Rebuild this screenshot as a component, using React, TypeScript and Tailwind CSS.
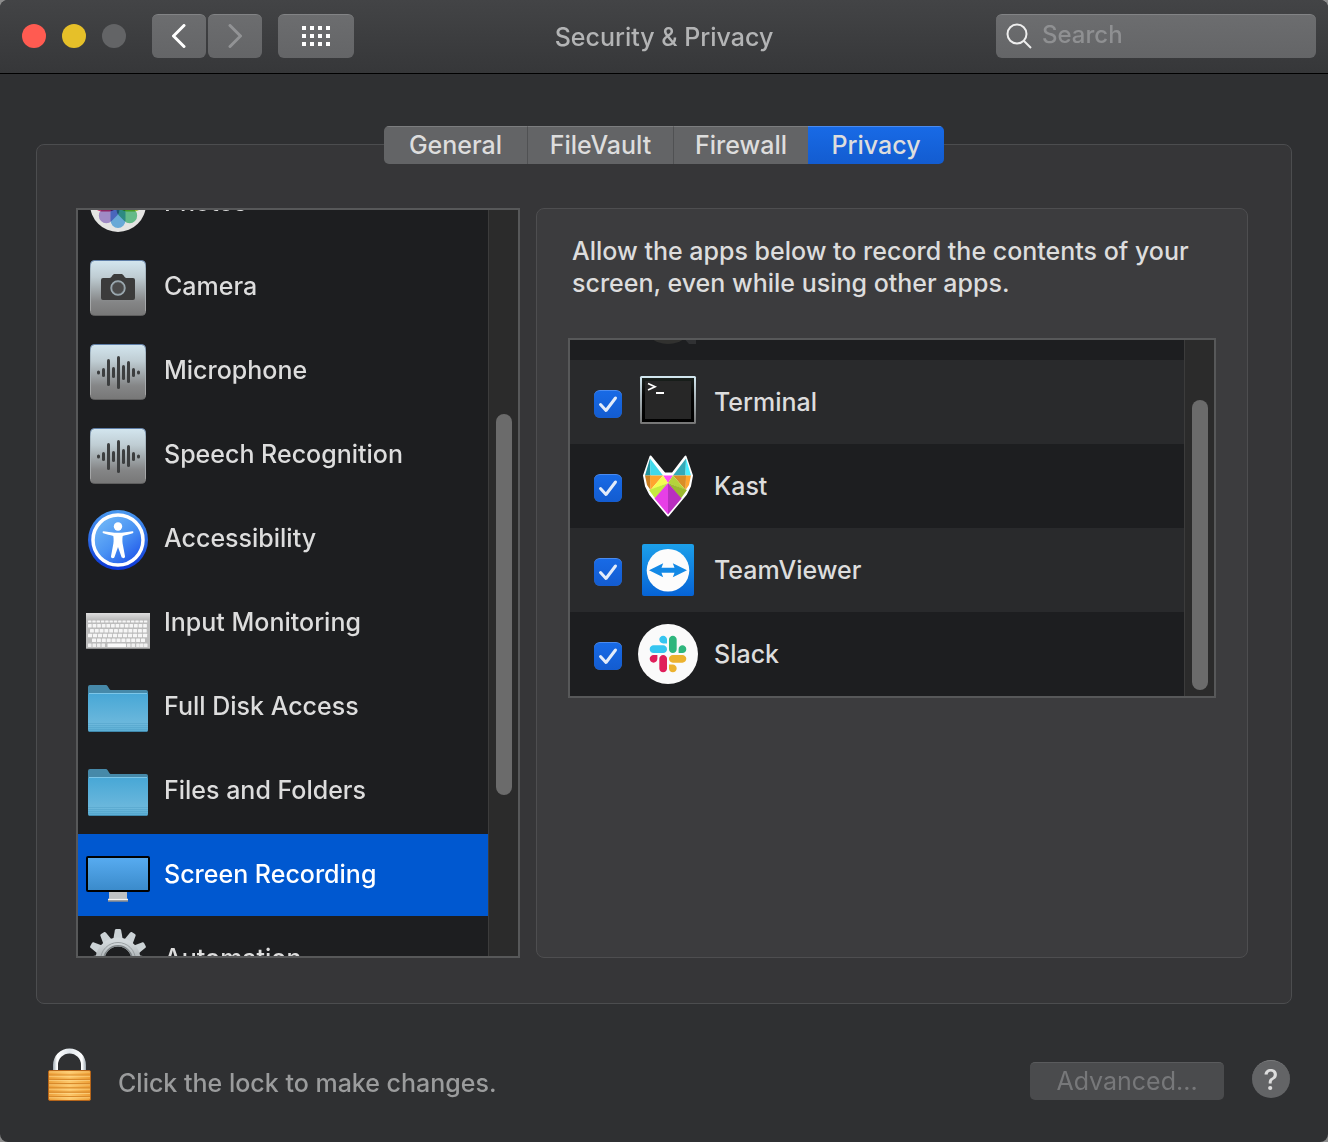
import { useLayoutEffect, useRef, useState } from "react";
import type { ReactNode } from "react";

const ANGLES_12 = [0, 30, 60, 90, 120, 150, 180, 210, 240, 270, 300, 330];

function Tile({ id, children }: { id: string; children: ReactNode }) {
  return (
    <svg viewBox="0 0 64 64" className="size-16" aria-hidden="true">
      <defs>
        <linearGradient id={`${id}-bg`} x1="0" y1="0" x2="0" y2="1">
          <stop offset="0" stopColor="#d3e6ef" />
          <stop offset="0.3" stopColor="#bfcdd3" />
          <stop offset="0.75" stopColor="#858687" />
          <stop offset="1" stopColor="#777777" />
        </linearGradient>
        <linearGradient id={`${id}-edge`} x1="0" y1="0" x2="0" y2="1">
          <stop offset="0" stopColor="#5f7fa8" />
          <stop offset="0.15" stopColor="#a9bac4" />
          <stop offset="0.9" stopColor="#a4a4a4" />
          <stop offset="1" stopColor="#5e5e5e" />
        </linearGradient>
      </defs>
      <rect x="4.5" y="4.5" width="55" height="55" rx="4" fill={`url(#${id}-bg)`} stroke={`url(#${id}-edge)`} />
      {children}
    </svg>
  );
}

function PhotosIcon() {
  const petals = [
    [0, "#f7a23b"],
    [45, "#f5d33c"],
    [90, "#b4d545"],
    [135, "#6fd09a"],
    [180, "#74bdf3"],
    [225, "#b39adf"],
    [270, "#e0457e"],
    [315, "#ef5a3f"],
  ] as const;
  return (
    <svg viewBox="0 0 64 64" className="size-16" aria-hidden="true">
      <circle cx="32" cy="32" r="28" fill="#e4e4e2" />
      {petals.map(([angle, color]) => (
        <rect
          key={angle}
          x="24.5"
          y="8"
          width="15"
          height="23"
          rx="7.5"
          fill={color}
          className="mix-blend-multiply"
          transform={`rotate(${angle} 32 32)`}
        />
      ))}
    </svg>
  );
}

function CameraIcon() {
  return (
    <Tile id="camera">
      <path
        d="M17 22h6.500c1.500 0 2-1 2.700-2.200.7-1.300 1.500-1.800 2.800-1.800h6c1.300 0 2.100.5 2.800 1.800.7 1.200 1.200 2.200 2.700 2.200H47a2 2 0 0 1 2 2v18a2 2 0 0 1-2 2H17a2 2 0 0 1-2-2V24a2 2 0 0 1 2-2z"
        fill="#3b3b3b"
      />
      <circle cx="32" cy="32" r="6.800" fill="#4a4a4a" stroke="#9fadb4" strokeWidth="1.800" />
      <circle cx="32" cy="32" r="6" fill="none" stroke="#6c7478" strokeWidth="0.600" />
    </Tile>
  );
}

function WaveIcon({ id }: { id: string }) {
  const bars = [
    [12.5, 30.5, 4],
    [17.5, 28, 9],
    [22.500, 19, 27],
    [27.5, 27, 11],
    [32.500, 16, 33],
    [37.5, 25, 15],
    [42.5, 21, 22],
    [47.5, 28, 9],
    [52.5, 30.5, 4],
  ];
  return (
    <Tile id={id}>
      {bars.map(([x, y, h]) => (
        <rect key={x} x={x - 1.5} y={y} width="3" height={h} rx="1.500" fill="#3c3e3f" />
      ))}
    </Tile>
  );
}

function AccessibilityIcon() {
  return (
    <svg viewBox="0 0 64 64" className="size-16" aria-hidden="true">
      <defs>
        <linearGradient id="acc-bg" x1="0.15" y1="0.1" x2="0.85" y2="0.95">
          <stop offset="0" stopColor="#6fb6f7" />
          <stop offset="0.5" stopColor="#4a93f3" />
          <stop offset="1" stopColor="#1f55ea" />
        </linearGradient>
        <linearGradient id="acc-rim" x1="0" y1="0" x2="0" y2="1">
          <stop offset="0" stopColor="#4a9af0" />
          <stop offset="1" stopColor="#0b36d8" />
        </linearGradient>
      </defs>
      <circle cx="32" cy="32" r="30" fill="url(#acc-rim)" />
      <circle cx="32" cy="32" r="25" fill="url(#acc-bg)" stroke="#fff" strokeWidth="3.500" />
      <circle cx="32" cy="18.500" r="4.200" fill="#fff" />
      <path
        d="M17.500 23.300c-1-.2-1.300 1.600-.2 2 3.200 1.100 6.900 1.900 10 2.600.6 3.500.3 7-.3 9.500L25 48.300c-.4 2 2.800 2.800 3.500.8L32 39l3.500 10.100c.7 2 3.900 1.200 3.500-.8l-2-10.900c-.6-2.500-.9-6-.3-9.500 3.100-.7 6.800-1.500 10-2.600 1.100-.4.800-2.200-.2-2-4.800.9-9.700 1.500-14.500 1.500s-9.700-.6-14.500-1.500z"
        fill="#fff"
      />
    </svg>
  );
}

function KeyboardIcon() {
  const rows = [
    { y: 28.5, h: 2, offset: 2, count: 14, w: 4.3 },
    { y: 32, h: 3.500, offset: 2, count: 13, w: 4.6 },
    { y: 37, h: 3.500, offset: 4, count: 12, w: 4.8 },
    { y: 41.800, h: 3.500, offset: 2, count: 12, w: 5 },
    { y: 46.600, h: 3.500, offset: 6, count: 11, w: 4.9 },
  ];
  return (
    <svg viewBox="0 0 64 64" className="size-16" aria-hidden="true">
      <defs>
        <linearGradient id="kbd-top" x1="0" y1="0" x2="0" y2="1">
          <stop offset="0" stopColor="#dedede" />
          <stop offset="1" stopColor="#b9b9b9" />
        </linearGradient>
      </defs>
      <rect x="0" y="21" width="64" height="36" rx="0.800" fill="#bcbcbc" />
      <rect x="0" y="21" width="64" height="7" fill="url(#kbd-top)" />
      <rect x="0" y="56" width="64" height="1" fill="#8f8f8f" />
      {rows.map((r) =>
        Array.from({ length: r.count }, (_, i) => (
          <rect key={`${r.y}-${i}`} x={r.offset + i * r.w} y={r.y} width={r.w - 0.9} height={r.h} rx="0.5" fill="#f6f6f6" />
        )),
      )}
      {[2, 6.500, 11, 15.500, 41, 45.500, 50.200, 54, 58].map((x) => (
        <rect key={x} x={x} y="51.500" width="3.500" height="3.500" rx="0.500" fill="#f0f0f0" />
      ))}
      <rect x="21.500" y="51.500" width="18.500" height="3.500" rx="0.500" fill="#fafafa" />
    </svg>
  );
}

function FolderIcon({ id }: { id: string }) {
  return (
    <svg viewBox="0 0 64 64" className="size-16" aria-hidden="true">
      <defs>
        <linearGradient id={id} x1="0" y1="0" x2="0" y2="1">
          <stop offset="0" stopColor="#47a7d6" />
          <stop offset="0.8" stopColor="#6cb8dc" />
          <stop offset="1" stopColor="#5aaed4" />
        </linearGradient>
      </defs>
      <path d="M2 11a2 2 0 0 1 2-2h15.500c1.200 0 1.900.6 2.500 1.700l1.200 2c.5.900 1 1.300 2.300 1.300H60a2 2 0 0 1 2 2v8H2z" fill="#4689a9" />
      <path d="M2 19a2 2 0 0 1 2-2h56a2 2 0 0 1 2 2v35a2 2 0 0 1-2 2H4a2 2 0 0 1-2-2z" fill={`url(#${id})`} />
      <path d="M3 17.500h58" stroke="#7cc6e8" strokeWidth="1" />
      <path d="M2 47.500h60M2 49.500h60M2 51.500h60M2 53.500h60" stroke="#4a9cc4" strokeWidth="0.700" opacity="0.6" />
      <path d="M3 55.500h58" stroke="#3f88ac" strokeWidth="1" />
    </svg>
  );
}

function DisplayIcon() {
  return (
    <svg viewBox="0 0 64 64" className="size-16" aria-hidden="true">
      <defs>
        <linearGradient id="display" x1="0" y1="0" x2="0" y2="1">
          <stop offset="0" stopColor="#57abf0" />
          <stop offset="1" stopColor="#3b8bcb" />
        </linearGradient>
      </defs>
      <path d="M23 47h18v7l1 2v1.500H22V56l1-2z" fill="#bfc1c4" />
      <path d="M22 55.500h20" stroke="#f4f4f4" strokeWidth="1.200" />
      <path d="M22 57h20" stroke="#777" strokeWidth="1" />
      <rect x="0" y="12" width="64" height="36" rx="2" fill="#000" />
      <rect x="2" y="14" width="60" height="32" fill="url(#display)" />
    </svg>
  );
}

function GearIcon() {
  return (
    <svg viewBox="0 0 64 64" className="size-16" aria-hidden="true">
      <defs>
        <linearGradient id="gear" x1="0" y1="0" x2="0" y2="1">
          <stop offset="0" stopColor="#d3d9dc" />
          <stop offset="0.5" stopColor="#a9afb2" />
          <stop offset="1" stopColor="#8b8f91" />
        </linearGradient>
      </defs>
      <g fill="#ccd3d6">
        {ANGLES_12.map((a) => (
          <path key={a} d="M27 13l1.800-10.500c.2-1 .7-1.500 1.600-1.500h3.200c.9 0 1.400.5 1.600 1.500L37 13z" transform={`rotate(${a} 32 32)`} />
        ))}
      </g>
      <circle cx="32" cy="32" r="18" fill="none" stroke="url(#gear)" strokeWidth="9" />
      <circle cx="32" cy="32" r="17.500" fill="none" stroke="#8d9396" strokeWidth="0.800" />
      <circle cx="32" cy="32" r="14.200" fill="none" stroke="#7e8487" strokeWidth="1.400" />
    </svg>
  );
}

function HiddenAppIcon() {
  return (
    <svg viewBox="0 0 64 64" className="size-16" aria-hidden="true">
      <ellipse cx="32" cy="34" rx="26" ry="24" fill="#31312f" />
      <path d="M46 50l14 4v4h-7z" fill="#303133" />
    </svg>
  );
}

function TerminalIcon() {
  return (
    <svg viewBox="0 2 64 64" className="size-16" aria-hidden="true">
      <defs>
        <linearGradient id="term-rim" x1="0" y1="0" x2="0" y2="1">
          <stop offset="0" stopColor="#d3e8f1" />
          <stop offset="1" stopColor="#757575" />
        </linearGradient>
        <linearGradient id="term-bezel" x1="0" y1="0" x2="0" y2="1">
          <stop offset="0" stopColor="#1a211d" />
          <stop offset="0.4" stopColor="#050505" />
          <stop offset="1" stopColor="#000" />
        </linearGradient>
      </defs>
      <rect x="4" y="8" width="56" height="48" rx="1.500" fill="url(#term-rim)" />
      <rect x="6" y="10" width="52" height="44" fill="url(#term-bezel)" />
      <rect x="9" y="13" width="46" height="38" fill="#272727" />
      <path d="M12 15.500l7 3.200-7 3.200" fill="none" stroke="#fff" strokeWidth="1.700" />
      <path d="M20 25h8" stroke="#fff" strokeWidth="2" />
    </svg>
  );
}

function KastIcon() {
  return (
    <svg viewBox="0 0 64 64" className="size-16" aria-hidden="true">
      <path
        d="M14.500 2.500L28.500 19.500h8L49.500 2.500 56 21.500 54 32 50 40 32 61.500 14 40 10 32 8 21.500z"
        fill="#fff"
        stroke="#fff"
        strokeWidth="2"
        strokeLinejoin="round"
      />
      <path d="M14 4.500L9 21.500h5.500z" fill="#1f929e" />
      <path d="M14 4.500l.5 17H27z" fill="#42d9ea" />
      <path d="M50 4.500L37 21.500h12.500z" fill="#33a9b8" />
      <path d="M50 4.500l-.500 17H55z" fill="#47eeff" />
      <path d="M9 21.500h5.500V36L11 31z" fill="#c97e20" />
      <path d="M14 21.500h13L14.500 36z" fill="#ffa52e" />
      <path d="M55 21.500h-5.500V36L53 31z" fill="#ffa52e" />
      <path d="M50 21.500H37L49.500 36z" fill="#d98d26" />
      <path d="M27 21.500h10L32 29z" fill="#ff4cf6" />
      <path d="M27 21.500L32 29l-17.500 7z" fill="#f5fc52" />
      <path d="M37 21.500L32 29l17.500 7z" fill="#b5d33b" />
      <path d="M32 29l-19 7 6.500 9z" fill="#c5ea3f" />
      <path d="M32 29l19 7-6.500 9z" fill="#9db92f" />
      <path d="M32 29L18.500 44.500 32 60.500z" fill="#e73fe6" />
      <path d="M32 29l13.500 15.500L32 60.500z" fill="#b92fc0" />
    </svg>
  );
}

function TeamViewerIcon() {
  return (
    <svg viewBox="0 0 64 64" className="size-16" aria-hidden="true">
      <defs>
        <linearGradient id="tv" x1="0" y1="0" x2="0" y2="1">
          <stop offset="0" stopColor="#1ca0ea" />
          <stop offset="1" stopColor="#0663d6" />
        </linearGradient>
      </defs>
      <rect x="6" y="6" width="52" height="52" rx="2" fill="url(#tv)" />
      <circle cx="32" cy="32.300" r="21.300" fill="#fcfcfc" />
      <path d="M13 32.300L27.200 25.300l-1.700 4.500h13l-1.700-4.500L51 32.300l-14.200 7 1.700-4.500h-13l1.700 4.500z" fill="#1389e6" />
    </svg>
  );
}

function SlackIcon() {
  return (
    <svg viewBox="0 0 64 64" className="size-16" aria-hidden="true">
      <circle cx="32" cy="32" r="30" fill="#fafafa" />
      <g transform="translate(13.700 13.700) scale(0.298)">
        <path d="M25.800 77.600c0 7.100-5.800 12.900-12.900 12.900S0 84.700 0 77.600s5.800-12.900 12.900-12.900h12.900v12.900zm6.500 0c0-7.100 5.800-12.900 12.900-12.900s12.900 5.800 12.900 12.900v32.300c0 7.100-5.800 12.900-12.900 12.900s-12.900-5.800-12.900-12.900V77.600z" fill="#e01e5a" />
        <path d="M45.200 25.800c-7.100 0-12.900-5.800-12.900-12.900S38.100 0 45.200 0s12.900 5.800 12.900 12.900v12.900H45.200zm0 6.500c7.100 0 12.900 5.800 12.900 12.900s-5.800 12.900-12.900 12.900H12.900C5.800 58.100 0 52.300 0 45.200s5.800-12.900 12.900-12.900h32.300z" fill="#36c5f0" />
        <path d="M97 45.200c0-7.100 5.800-12.900 12.900-12.900s12.900 5.800 12.900 12.900-5.800 12.900-12.900 12.900H97V45.200zm-6.500 0c0 7.100-5.800 12.900-12.900 12.900s-12.900-5.800-12.900-12.900V12.900C64.700 5.800 70.500 0 77.600 0s12.900 5.800 12.900 12.900v32.300z" fill="#2eb67d" />
        <path d="M77.600 97c7.100 0 12.900 5.800 12.900 12.900s-5.800 12.900-12.900 12.900-12.900-5.800-12.900-12.900V97h12.900zm0-6.500c-7.100 0-12.900-5.800-12.900-12.900s5.800-12.900 12.900-12.900h32.300c7.100 0 12.900 5.800 12.900 12.900s-5.800 12.900-12.900 12.900H77.600z" fill="#ecb22e" />
      </g>
    </svg>
  );
}

function LockIcon() {
  return (
    <svg viewBox="0 0 44 56" className="h-14 w-11" aria-hidden="true">
      <defs>
        <linearGradient id="lock-body" x1="0" y1="0" x2="1" y2="0">
          <stop offset="0" stopColor="#eda03a" />
          <stop offset="0.5" stopColor="#fdc76a" />
          <stop offset="1" stopColor="#ee9f35" />
        </linearGradient>
        <linearGradient id="lock-shackle" x1="0" y1="0" x2="1" y2="0">
          <stop offset="0" stopColor="#9ba5ad" />
          <stop offset="0.120" stopColor="#ffffff" />
          <stop offset="0.5" stopColor="#dfe5ea" />
          <stop offset="0.880" stopColor="#ffffff" />
          <stop offset="1" stopColor="#9ba5ad" />
        </linearGradient>
      </defs>
      <path d="M5 26v-8a16.500 16.500 0 0 1 33 0v8h-5v-8a11.500 11.500 0 0 0-23 0v8z" fill="url(#lock-shackle)" />
      <rect x="0.500" y="23.500" width="42" height="30" rx="1.500" fill="url(#lock-body)" stroke="#b5651a" />
      <path d="M1 28h41M1 32.300h41M1 36.600h41M1 40.900h41M1 45.200h41M1 49.500h41" stroke="#d98a2b" strokeWidth="1.200" />
      <path d="M1 25h41M1 29.300h41M1 33.600h41M1 37.900h41M1 42.200h41M1 46.500h41M1 50.800h41" stroke="#ffdf95" strokeWidth="1" opacity="0.6" />
    </svg>
  );
}

const CATEGORIES: { name: string; icon: ReactNode }[] = [
  { name: "Photos", icon: <PhotosIcon /> },
  { name: "Camera", icon: <CameraIcon /> },
  { name: "Microphone", icon: <WaveIcon id="mic" /> },
  { name: "Speech Recognition", icon: <WaveIcon id="speech" /> },
  { name: "Accessibility", icon: <AccessibilityIcon /> },
  { name: "Input Monitoring", icon: <KeyboardIcon /> },
  { name: "Full Disk Access", icon: <FolderIcon id="folder-disk" /> },
  { name: "Files and Folders", icon: <FolderIcon id="folder-files" /> },
  { name: "Screen Recording", icon: <DisplayIcon /> },
  { name: "Automation", icon: <GearIcon /> },
];

const APPS: { name: string; icon: ReactNode }[] = [
  { name: "Terminal", icon: <TerminalIcon /> },
  { name: "Kast", icon: <KastIcon /> },
  { name: "TeamViewer", icon: <TeamViewerIcon /> },
  { name: "Slack", icon: <SlackIcon /> },
];

const TABS = [
  { name: "General", width: "w-[143px]" },
  { name: "FileVault", width: "w-[146px]" },
  { name: "Firewall", width: "w-[135px]" },
  { name: "Privacy", width: "w-[136px]" },
];

function ScrollBox({ start, thumb, className, children }: { start: number; thumb: string; className: string; children: ReactNode }) {
  const ref = useRef<HTMLDivElement>(null);
  useLayoutEffect(() => {
    if (ref.current) ref.current.scrollTop = start;
  }, [start]);
  return (
    <div className={`flex min-h-0 border-2 border-[#575859] bg-[#1d1e20] ${className}`}>
      <div ref={ref} className="min-w-0 flex-1 overflow-y-auto [scrollbar-width:none]">
        {children}
      </div>
      <div className={`grid w-[30px] shrink-0 border-l border-[#3c3c3c] bg-[#2b2b2b] px-[7px] ${thumb}`}>
        <div className="row-start-2 w-4 rounded-full bg-[#6b6b6b]" />
      </div>
    </div>
  );
}

const toolButton =
  "flex h-11 items-center justify-center rounded-md border-t border-[#828385] bg-linear-to-b from-[#6c6d6f] to-[#646567]";

export default function App() {
  const [tab, setTab] = useState("Privacy");
  const [category, setCategory] = useState("Screen Recording");

  return (
    <div className="bg-[#8c8c8c] font-['Inter',sans-serif] text-[25px] leading-8 font-medium text-[#dddddd]">
      <div className="flex h-screen min-h-[700px] flex-col overflow-hidden rounded-lg bg-[#2f3032]">
        <header className="grid h-[74px] shrink-0 grid-cols-[1fr_auto_1fr] items-center border-b border-black bg-linear-to-b from-[#434446] to-[#363739] px-3 pb-0.5">
          <div className="flex items-center pl-2.5">
            <div className="flex gap-4">
              <button aria-label="Close" className="size-6 rounded-full bg-[#ff5b51]" />
              <button aria-label="Minimize" className="size-6 rounded-full bg-[#e6c029]" />
              <button aria-label="Zoom" disabled className="size-6 rounded-full bg-[#636466]" />
            </div>
            <div className="ml-[26px] flex gap-0.5">
              <button aria-label="Back" className={`w-[54px] ${toolButton}`}>
                <svg viewBox="0 0 14 24" className="h-6 w-3.5" fill="none" stroke="#fff" strokeWidth="3" strokeLinecap="round" strokeLinejoin="round">
                  <path d="M12 1.500L1.500 12 12 22.500" />
                </svg>
              </button>
              <button aria-label="Forward" disabled className={`w-[54px] ${toolButton}`}>
                <svg viewBox="0 0 14 24" className="h-6 w-3.5" fill="none" stroke="#929395" strokeWidth="3" strokeLinecap="round" strokeLinejoin="round">
                  <path d="M2 1.500L12.500 12 2 22.500" />
                </svg>
              </button>
            </div>
            <button aria-label="Show All" className={`ml-4 w-[76px] ${toolButton}`}>
              <svg viewBox="0 0 28 20" className="h-5 w-7" fill="#fff">
                {[0, 8, 16].map((y) => [0, 8, 16, 24].map((x) => <rect key={`${x}-${y}`} x={x} y={y} width="4" height="4" />))}
              </svg>
            </button>
          </div>
          <h1 className="pt-0.5 text-[#b3b4b5]">Security &amp; Privacy</h1>
          <label className="flex h-11 w-80 items-center justify-self-end rounded-md border-t border-[#828385] bg-linear-to-b from-[#6c6d6f] to-[#646567] pl-2.5">
            <svg viewBox="0 0 26 26" className="size-[26px] shrink-0" fill="none" stroke="#eeeeee" strokeWidth="2">
              <circle cx="11" cy="11" r="9.500" />
              <path d="M17.500 17.500l7.500 7.500" />
            </svg>
            <input aria-label="Search" placeholder="Search" className="ml-2.5 min-w-0 flex-1 bg-transparent pb-0.5 text-[24px] outline-none placeholder:text-[#8f9092]" />
          </label>
        </header>

        <main className="flex min-h-0 flex-1 flex-col px-9 pt-[52px]">
          <div role="tablist" className="relative -mb-5 flex self-center overflow-hidden rounded-[5px]">
            {TABS.map((t, i) => (
              <button
                key={t.name}
                role="tab"
                aria-selected={tab === t.name}
                onClick={() => setTab(t.name)}
                className={`flex h-[38px] items-center justify-center border-t pb-0.5 ${t.width} ${i > 0 && i < 3 ? "border-l border-l-[#505153]" : ""} ${
                  tab === t.name ? "border-t-[#4a8bf0] bg-linear-to-b from-[#186ae6] to-[#135cd0]" : "border-t-[#7c7d7f] bg-[#636466]"
                }`}
              >
                {t.name}
              </button>
            ))}
          </div>

          <section className="flex min-h-0 flex-1 gap-4 rounded-lg border border-[#4c4d4f] bg-[#363638] pt-[63px] pr-[43px] pb-[45px] pl-[39px]">
            <ScrollBox start={48} thumb="grid-rows-[204fr_381fr_161fr]" className="w-[444px] shrink-0">
              <ul className="flex flex-col gap-0.5">
                {CATEGORIES.map((c) => (
                  <li key={c.name}>
                    <button
                      onClick={() => setCategory(c.name)}
                      className={`flex h-[82px] w-full items-center gap-3.5 pl-2 text-left ${category === c.name ? "bg-[#0058d0] text-white" : ""}`}
                    >
                      <span className="pt-0.5">{c.icon}</span>
                      <span className="pb-0.5">{c.name}</span>
                    </button>
                  </li>
                ))}
              </ul>
            </ScrollBox>

            <div className="min-w-0 flex-1 rounded-lg border border-[#4e4e50] bg-[#3c3c3e] px-[31px] pt-[26px]">
              <p className="px-1">Allow the apps below to record the contents of your screen, even while using other apps.</p>
              <ScrollBox start={64} thumb="grid-rows-[60fr_290fr_6fr]" className="mt-[39px] h-[360px]">
                <ul>
                  <li className="flex h-21 items-center pl-[66px]">
                    <HiddenAppIcon />
                  </li>
                  {APPS.map((a, i) => (
                    <li key={a.name} className={i % 2 === 0 ? "bg-[#292a2c]" : ""}>
                      <label className="flex h-21 items-center gap-3.5 pl-6">
                        <span className="mt-1 grid size-7">
                          <input
                            type="checkbox"
                            defaultChecked
                            className="peer col-start-1 row-start-1 size-7 appearance-none rounded-md border-t border-[#8a8b8d] bg-[#636466] checked:border-[#4a8bf0] checked:bg-linear-to-b checked:from-[#186ae6] checked:to-[#135cd0]"
                          />
                          <svg viewBox="0 0 28 28" className="pointer-events-none invisible col-start-1 row-start-1 size-7 peer-checked:visible" fill="none" stroke="#e3ecfa" strokeWidth="3" strokeLinecap="round" strokeLinejoin="round">
                            <path d="M6.500 14.500l5.500 6L21.500 8" />
                          </svg>
                        </span>
                        {a.icon}
                        <span>{a.name}</span>
                      </label>
                    </li>
                  ))}
                </ul>
              </ScrollBox>
            </div>
          </section>
        </main>

        <footer className="flex h-[138px] shrink-0 items-center pr-[38px] pl-12 pb-3">
          <button aria-label="Unlock" className="mt-4">
            <LockIcon />
          </button>
          <p className="mt-8 ml-[26px] flex-1 text-[#9b9c9d]">Click the lock to make changes.</p>
          <button disabled className="mt-7 h-[38px] w-[194px] rounded-[5px] border-t border-[#5a5b5d] bg-[#4a4b4d] pb-0.5 font-normal text-[#77787a]">
            Advanced...
          </button>
          <button aria-label="Help" className="mt-6 ml-7 flex size-[38px] items-center justify-center rounded-full border-t border-[#7c7d7f] bg-[#636466] text-[28px]">
            ?
          </button>
        </footer>
      </div>
    </div>
  );
}
